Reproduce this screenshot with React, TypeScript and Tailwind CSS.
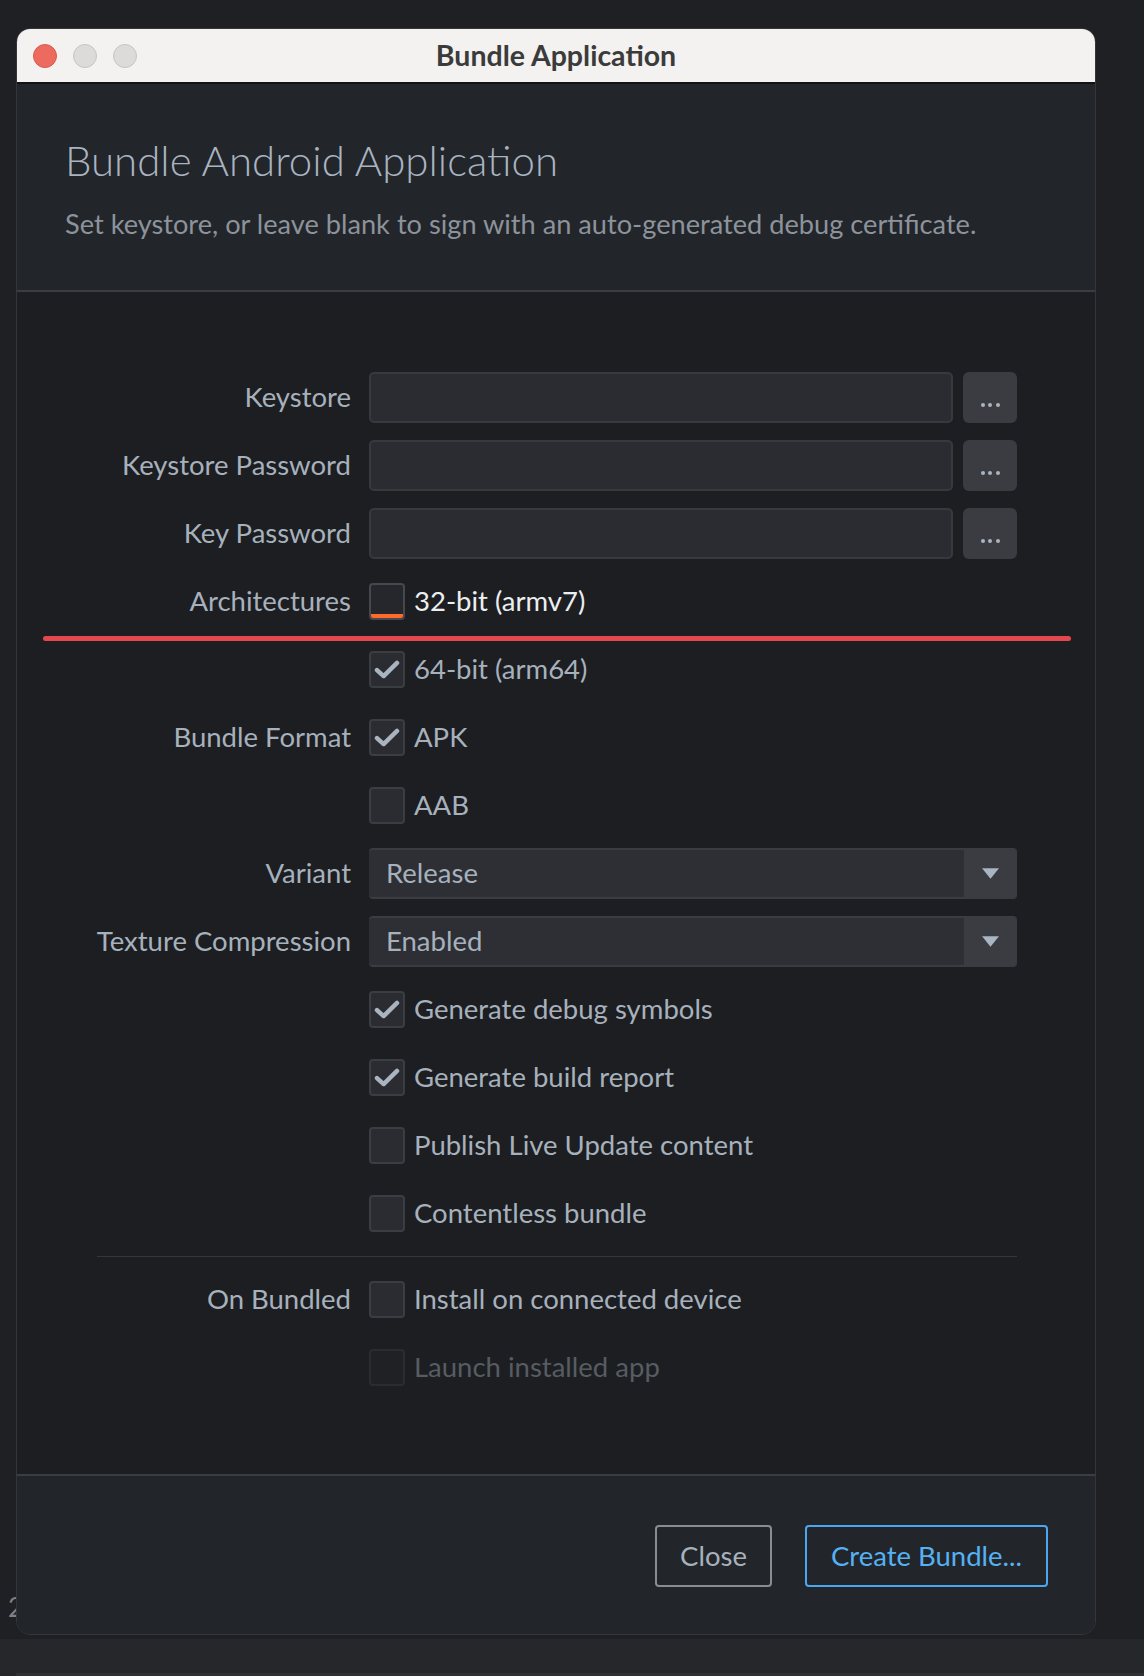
import React from "react";

const font = { fontFamily: "Lato, 'Noto Sans', sans-serif" };

function Check() {
  return (
    <svg viewBox="0 0 24 18" className="w-[26px] h-[19px]" fill="none">
      <path d="M2.5 9.5L8.8 15.2L21.5 2.8" stroke="#a9b4c0" strokeWidth="4.2" strokeLinecap="round" strokeLinejoin="round" />
    </svg>
  );
}

function Checkbox({ checked = false, focused = false, disabled = false }: { checked?: boolean; focused?: boolean; disabled?: boolean }) {
  return (
    <div
      className={
        "relative w-[36px] h-[37px] rounded-[4px] border-2 flex items-center justify-center overflow-hidden " +
        (disabled ? "bg-[#1f2125] border-[#2a2c30]" : focused ? "bg-[#25272c] border-[#45484d]" : "bg-[#2a2c31] border-[#3a3d42]")
      }
    >
      {checked && <Check />}
      {focused && <div className="absolute left-0 right-0 bottom-0 h-[4px] bg-[#ff6a2b]" />}
    </div>
  );
}

function Row({ label, children }: { label?: string; children: React.ReactNode }) {
  return (
    <div className="flex items-center h-[68px]">
      <div className="w-[334px] text-right text-[27.5px] text-[#a7b1bc] leading-none">{label}</div>
      <div className="ml-[18px] flex items-center">{children}</div>
    </div>
  );
}

function FileField() {
  return (
    <div className="flex items-center gap-[10px]">
      <div className="w-[584px] h-[51px] rounded-[5px] bg-[#2a2c31] border-2 border-[#36393e]" />
      <div className="w-[54px] h-[51px] rounded-[6px] bg-[#3a3c41] flex items-center justify-center gap-[3.5px] pt-[16px]">
        <span className="w-[4px] h-[4px] rounded-full bg-[#a9b4c0]" />
        <span className="w-[4px] h-[4px] rounded-full bg-[#a9b4c0]" />
        <span className="w-[4px] h-[4px] rounded-full bg-[#a9b4c0]" />
      </div>
    </div>
  );
}

function CheckItem({ text, checked, focused, disabled }: { text: string; checked?: boolean; focused?: boolean; disabled?: boolean }) {
  return (
    <div className="flex items-center gap-[9px]">
      <Checkbox checked={checked} focused={focused} disabled={disabled} />
      <span
        className={
          "text-[27.5px] leading-none " +
          (disabled ? "text-[#575c63]" : focused ? "text-[#eceef0]" : "text-[#a7b1bc]")
        }
      >
        {text}
      </span>
    </div>
  );
}

function Select({ value }: { value: string }) {
  return (
    <div className="flex w-[648px] h-[51px] rounded-[4px] overflow-hidden bg-[#2d2f34] border-y-2 border-[#3a3c41]">
      <div className="flex-1 flex items-center pl-[17px] text-[27.5px] text-[#a7b1bc] leading-none">{value}</div>
      <div className="w-[53px] bg-[#3a3c41] flex items-center justify-center">
        <svg viewBox="0 0 16 10" className="w-[17px] h-[11px]">
          <polygon points="0,0 16,0 8,10" fill="#a9b5c2" />
        </svg>
      </div>
    </div>
  );
}

export default function App() {
  return (
    <div className="relative w-[1144px] h-[1676px] bg-[#1e2024] overflow-hidden" style={font}>
      {/* stray glyph behind window */}
      <span className="absolute left-[8px] top-[1588px] text-[26px] text-[#7d8085]">2</span>

      <div className="pt-[28px] pl-[16px]">
        <div className="relative z-10 w-[1080px] h-[1607px] rounded-[14px] overflow-hidden border border-[#34363b] bg-[#1c1e22] flex flex-col">
          {/* title bar */}
          <div className="relative h-[55px] bg-[#f3f2f0] border-b-2 border-[#111214] flex items-center justify-center">
            <div className="absolute left-[16px] top-[15px] flex gap-[16px]">
              <span className="w-[24px] h-[24px] rounded-full bg-[#ed6a5e] border border-[#d95a4f]" />
              <span className="w-[24px] h-[24px] rounded-full bg-[#dcdbd9] border border-[#c6c5c3]" />
              <span className="w-[24px] h-[24px] rounded-full bg-[#dcdbd9] border border-[#c6c5c3]" />
            </div>
            <span className="text-[28.5px] font-bold text-[#3b3b3b] leading-none">Bundle Application</span>
          </div>

          {/* header */}
          <div className="h-[208px] bg-[#22252a] border-b-2 border-[#3a3d42] pl-[48px] pt-[50px]">
            <div className="text-[42px] font-light text-[#a9b4c0] leading-[52px]">Bundle Android Application</div>
            <div className="mt-[21px] text-[27.2px] text-[#8c939b] leading-[34px]">
              Set keystore, or leave blank to sign with an auto-generated debug certificate.
            </div>
          </div>

          {/* form */}
          <div className="relative pt-[71px] pb-[73px]">
            <Row label="Keystore"><FileField /></Row>
            <Row label="Keystore Password"><FileField /></Row>
            <Row label="Key Password"><FileField /></Row>
            <Row label="Architectures"><CheckItem text="32-bit (armv7)" focused /></Row>
            <Row><CheckItem text="64-bit (arm64)" checked /></Row>
            <Row label="Bundle Format"><CheckItem text="APK" checked /></Row>
            <Row><CheckItem text="AAB" /></Row>
            <Row label="Variant"><Select value="Release" /></Row>
            <Row label="Texture Compression"><Select value="Enabled" /></Row>
            <Row><CheckItem text="Generate debug symbols" checked /></Row>
            <Row><CheckItem text="Generate build report" checked /></Row>
            <Row><CheckItem text="Publish Live Update content" /></Row>
            <Row><CheckItem text="Contentless bundle" /></Row>
            <div className="ml-[80px] w-[920px] h-px bg-[#33363b] mt-[9px] mb-[8px]" />
            <Row label="On Bundled"><CheckItem text="Install on connected device" /></Row>
            <Row><CheckItem text="Launch installed app" disabled /></Row>

            {/* annotation line */}
            <div className="absolute left-[26px] w-[1028px] top-[344px] h-[5px] rounded-full bg-[#e5474f]" />
          </div>

          {/* footer */}
          <div className="flex-1 bg-[#22252a] border-t-2 border-[#3a3d42] flex justify-end items-start pt-[49px] pr-[47px] gap-[33px]">
            <button className="w-[117px] h-[62px] rounded-[4px] border-2 border-[#8a8c8f] text-[27.5px] text-[#a7b1bc] leading-none">
              Close
            </button>
            <button className="w-[243px] h-[62px] rounded-[4px] border-2 border-[#4aa8f0] text-[27.5px] text-[#55b1f3] leading-none">
              Create Bundle...
            </button>
          </div>
        </div>
      </div>

      {/* bottom strip */}
      <div className="absolute left-0 right-0 top-[1639px] bottom-0 bg-[#26272b]">
        <div className="absolute left-[16px] right-0 top-[34px] h-[3px] bg-[#2f3135]" />
      </div>
    </div>
  );
}
